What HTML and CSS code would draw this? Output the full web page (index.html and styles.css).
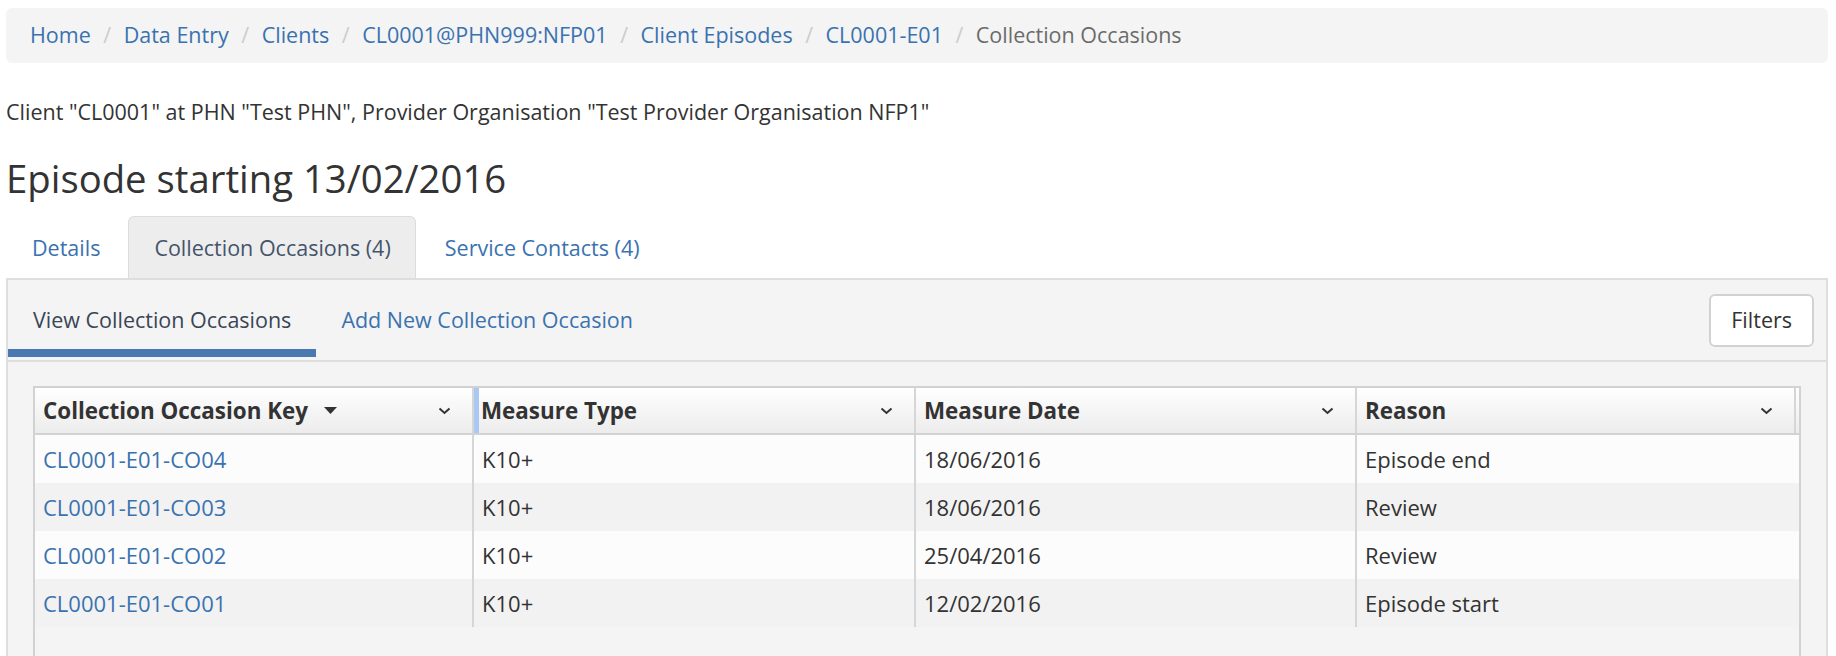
FILE: index.html
```html
<!DOCTYPE html>
<html lang="en">
<head>
<meta charset="utf-8">
<title>Collection Occasions</title>
<link rel="stylesheet" href="styles.css">
</head>
<body>
<div class="page">
  <ol class="breadcrumb">
    <li><a href="#">Home</a></li>
    <li class="sep">/</li>
    <li><a href="#">Data Entry</a></li>
    <li class="sep">/</li>
    <li><a href="#">Clients</a></li>
    <li class="sep">/</li>
    <li><a href="#">CL0001@PHN999:NFP01</a></li>
    <li class="sep">/</li>
    <li><a href="#">Client Episodes</a></li>
    <li class="sep">/</li>
    <li><a href="#">CL0001-E01</a></li>
    <li class="sep">/</li>
    <li class="current">Collection Occasions</li>
  </ol>

  <p class="client-info">Client "CL0001" at PHN "Test PHN", Provider Organisation "Test Provider Organisation NFP1"</p>

  <h2 class="episode-title">Episode starting 13/02/2016</h2>

  <ul class="nav-tabs">
    <li><a href="#">Details</a></li>
    <li class="active"><a href="#">Collection Occasions (4)</a></li>
    <li><a href="#">Service Contacts (4)</a></li>
  </ul>

  <div class="tab-panel">
    <div class="subnav">
      <div class="subnav-links">
        <a href="#" class="subnav-link active">View Collection Occasions</a>
        <a href="#" class="subnav-link">Add New Collection Occasion</a>
      </div>
      <button class="btn-filters" type="button">Filters</button>
    </div>

    <div class="grid-wrap">
      <div class="grid">
        <div class="grid-header">
          <div class="hcell col1">
            <span class="htext">Collection Occasion Key</span>
            <svg class="sort-icon" width="13" height="7" viewBox="0 0 13 7"><polygon points="0,0 13,0 6.5,7" fill="#333"/></svg>
            <svg class="menu-icon" width="13" height="8" viewBox="0 0 13 8"><polyline points="1.5,1.5 6.5,6 11.5,1.5" fill="none" stroke="#333" stroke-width="2"/></svg>
          </div>
          <div class="hcell col2 hcell-highlight">
            <span class="htext">Measure Type</span>
            <svg class="menu-icon" width="13" height="8" viewBox="0 0 13 8"><polyline points="1.5,1.5 6.5,6 11.5,1.5" fill="none" stroke="#333" stroke-width="2"/></svg>
          </div>
          <div class="hcell col3">
            <span class="htext">Measure Date</span>
            <svg class="menu-icon" width="13" height="8" viewBox="0 0 13 8"><polyline points="1.5,1.5 6.5,6 11.5,1.5" fill="none" stroke="#333" stroke-width="2"/></svg>
          </div>
          <div class="hcell col4">
            <span class="htext">Reason</span>
            <svg class="menu-icon" width="13" height="8" viewBox="0 0 13 8"><polyline points="1.5,1.5 6.5,6 11.5,1.5" fill="none" stroke="#333" stroke-width="2"/></svg>
          </div>
          <div class="hcell-spacer"></div>
        </div>
        <div class="grid-body">
          <div class="row odd">
            <div class="cell col1"><a href="#">CL0001-E01-CO04</a></div>
            <div class="cell col2">K10+</div>
            <div class="cell col3">18/06/2016</div>
            <div class="cell col4">Episode end</div>
          </div>
          <div class="row even">
            <div class="cell col1"><a href="#">CL0001-E01-CO03</a></div>
            <div class="cell col2">K10+</div>
            <div class="cell col3">18/06/2016</div>
            <div class="cell col4">Review</div>
          </div>
          <div class="row odd">
            <div class="cell col1"><a href="#">CL0001-E01-CO02</a></div>
            <div class="cell col2">K10+</div>
            <div class="cell col3">25/04/2016</div>
            <div class="cell col4">Review</div>
          </div>
          <div class="row even">
            <div class="cell col1"><a href="#">CL0001-E01-CO01</a></div>
            <div class="cell col2">K10+</div>
            <div class="cell col3">12/02/2016</div>
            <div class="cell col4">Episode start</div>
          </div>
        </div>
      </div>
    </div>
  </div>
</div>
</body>
</html>
```
FILE: styles.css
```css
html, body {
  margin: 0;
  padding: 0;
  background: #fff;
  height: 656px;
  overflow: hidden;
}

body {
  font-family: "Open Sans", "Noto Sans", sans-serif;
  font-size: 21.5px;
  line-height: 30px;
  color: #333;
}

a {
  color: #3a72b0;
  text-decoration: none;
}

.page {
  padding: 8px 8px 0 6px;
}

/* Breadcrumb */
.breadcrumb {
  display: flex;
  align-items: center;
  list-style: none;
  margin: 0;
  padding: 12px 24px 13px;
  background: #f4f4f4;
  border-radius: 6px;
}

.breadcrumb .sep {
  color: #ccc;
  margin: 0 12.5px;
}

.breadcrumb .current {
  color: #6b6b6b;
}

/* Client info */
.client-info {
  margin: 34px 0 0;
  line-height: 30px;
}

/* Heading */
.episode-title {
  margin: 27px 0 0;
  font-size: 38.3px;
  line-height: 48px;
  font-weight: 400;
  color: #333;
}

/* Tabs */
.nav-tabs {
  display: flex;
  list-style: none;
  margin: 14px 0 0;
  padding: 0;
}

.nav-tabs li {
  margin-right: 3px;
}

.nav-tabs li a {
  display: block;
  padding: 16px 24px 15px 25px;
  border: 1px solid transparent;
  border-bottom: none;
  border-radius: 6px 6px 0 0;
}

.nav-tabs li.active a {
  background: #ededed;
  border-color: #dcdcdc;
  color: #44546a;
}

/* Panel */
.tab-panel {
  background: #f4f4f4;
  border: 2px solid #dedede;
  border-bottom: none;
  height: 600px;
}

.subnav {
  display: flex;
  justify-content: space-between;
  align-items: center;
  border-bottom: 2px solid #dedede;
  padding-right: 12px;
}

.subnav-links {
  display: flex;
  align-items: flex-end;
}

.subnav-link {
  display: block;
  padding: 25px 25px 14px;
  margin-bottom: 3px;
  border-bottom: 8px solid transparent;
}

.subnav-link.active {
  color: #3a4556;
  border-bottom-color: #4a78b0;
}

.btn-filters {
  font-family: inherit;
  font-size: 21.5px;
  line-height: 30px;
  color: #333;
  background: #fff;
  border: 2px solid #d2d2d2;
  border-radius: 6px;
  padding: 9px 20px 10px;
  cursor: pointer;
}

/* Grid */
.grid-wrap {
  padding: 24px 25px 0 25px;
}

.grid {
  border: 2px solid #d2d2d2;
  border-bottom: none;
  height: 400px;
  background: #f4f4f4;
  font-size: 22px;
}

.grid-header {
  display: flex;
  height: 45px;
  background: linear-gradient(#ffffff, #ececec);
  border-bottom: 2px solid #d2d2d2;
}

.col1 { flex: 0 0 439px; }
.col2 { flex: 0 0 442px; }
.col3 { flex: 0 0 441px; }
.col4 { flex: 1 1 auto; }

.hcell {
  display: flex;
  align-items: center;
  padding: 0 8px;
  box-sizing: border-box;
  border-right: 2px solid #d6d6d6;
  font-weight: 700;
  font-size: 22.4px;
  color: #333;
}

.hcell-highlight {
  box-shadow: inset 5px 0 0 #a9c9f2;
  padding-left: 7px;
}

.hcell-spacer {
  flex: 0 0 3px;
}

.htext {
  white-space: nowrap;
}

.sort-icon {
  margin-left: 16px;
}

.menu-icon {
  margin-left: auto;
  margin-right: 13px;
}

.grid-body {
  display: flex;
  flex-direction: column;
}

.row {
  display: flex;
  height: 48px;
  align-items: stretch;
}

.row.odd {
  background: #fcfcfc;
}

.row.even {
  background: #f2f2f2;
}

.cell {
  box-sizing: border-box;
  padding: 0 8px;
  display: flex;
  align-items: center;
  border-right: 2px solid #d6d6d6;
  white-space: nowrap;
}

.cell.col4 {
  border-right: none;
}
```
